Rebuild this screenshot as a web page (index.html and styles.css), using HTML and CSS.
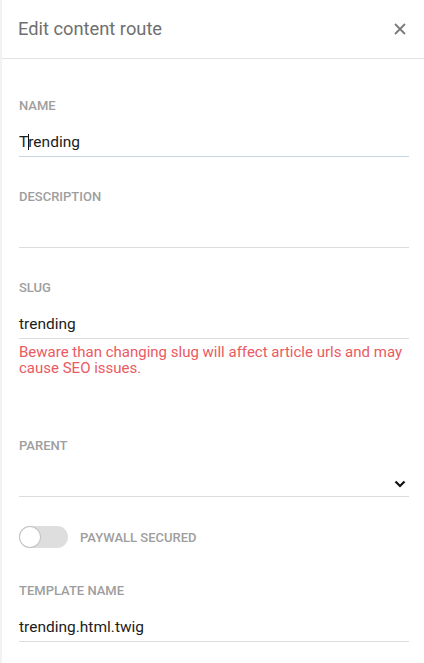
FILE: index.html
```html
<!DOCTYPE html>
<html>
<head>
<meta charset="utf-8">
<link rel="stylesheet" href="styles.css">
</head>
<body>
<div class="panel">
  <header class="head">
    <h1 class="title">Edit content route</h1>
    <button class="close" aria-label="Close">
      <svg width="12" height="12" viewBox="0 0 12 12"><path d="M1 1L11 11M11 1L1 11" stroke="#7a7a7a" stroke-width="1.8" fill="none"/></svg>
    </button>
  </header>
  <form class="form">
    <div class="field">
      <label class="label">NAME</label>
      <div class="input focused">T<span class="caret"></span>rending</div>
    </div>
    <div class="field">
      <label class="label">DESCRIPTION</label>
      <div class="input"></div>
    </div>
    <div class="field">
      <label class="label">SLUG</label>
      <div class="input">trending</div>
      <p class="error">Beware than changing slug will affect article urls and may cause SEO issues.</p>
    </div>
    <div class="field">
      <label class="label">PARENT</label>
      <div class="input select">
        <span class="value"></span>
        <svg class="chev" width="12" height="8" viewBox="0 0 12 8"><path d="M1.5 1.5L6 6L10.5 1.5" stroke="#111" stroke-width="2.2" fill="none"/></svg>
      </div>
    </div>
    <div class="toggle-row">
      <span class="toggle"><span class="knob"></span></span>
      <span class="toggle-label">PAYWALL SECURED</span>
    </div>
    <div class="field">
      <label class="label">TEMPLATE NAME</label>
      <div class="input">trending.html.twig</div>
    </div>
  </form>
</div>
</body>
</html>
```
FILE: styles.css
```css
* { box-sizing: border-box; }
html, body { margin: 0; padding: 0; background: #fff; }
body { font-family: Roboto, "Noto Sans", sans-serif; }
.panel {
  width: 424px;
  min-height: 663px;
  border-left: 2px solid #f2f2f2;
}
.head {
  height: 59px;
  display: flex;
  align-items: center;
  justify-content: space-between;
  border-bottom: 1px solid #e2e2e2;
  padding: 0 18px 1px 16px;
}
.title {
  margin: 0;
  font-size: 18.3px;
  font-weight: 400;
  color: #6f6f6f;
}
.close {
  border: 0;
  background: none;
  padding: 0;
  width: 12px;
  height: 12px;
  display: flex;
  cursor: pointer;
}
.form {
  padding: 40px 15px 0 17px;
  display: flex;
  flex-direction: column;
}
.field { display: flex; flex-direction: column; margin-bottom: 33px; }
.label {
  font-size: 13px;
  line-height: 14px;
  font-weight: 500;
  color: #9e9e9e;
}
.input {
  padding: 20px 0 5px;
  line-height: 18px;
  min-height: 44px;
  font-size: 15.5px;
  color: #1c1c1c;
  border-bottom: 1px solid #dcdcdc;
}
.input.focused { border-bottom-color: #c6d6e2; }
.caret {
  display: inline-block;
  width: 1px;
  height: 16px;
  background: #111;
  margin-right: -1px;
  vertical-align: -3px;
}
.select { display: flex; justify-content: space-between; align-items: center; padding-right: 3px; padding-top: 23px; }
.chev { display: block; }
.error {
  margin: 5px 0 30px;
  font-size: 15px;
  line-height: 16px;
  color: #ea5a62;
}
.toggle-row {
  display: flex;
  align-items: center;
  gap: 12px;
  margin: -4px 0 36px;
  height: 22px;
}
.toggle {
  width: 49px;
  height: 22px;
  border-radius: 11px;
  background: #dedede;
  display: flex;
  align-items: center;
  padding-left: 1px;
}
.knob {
  width: 20px;
  height: 20px;
  border-radius: 50%;
  background: #fff;
  box-shadow: 0 0 0 1px #c4c4c4;
}
.toggle-label {
  font-size: 13px;
  font-weight: 500;
  color: #9e9e9e;
}
```
